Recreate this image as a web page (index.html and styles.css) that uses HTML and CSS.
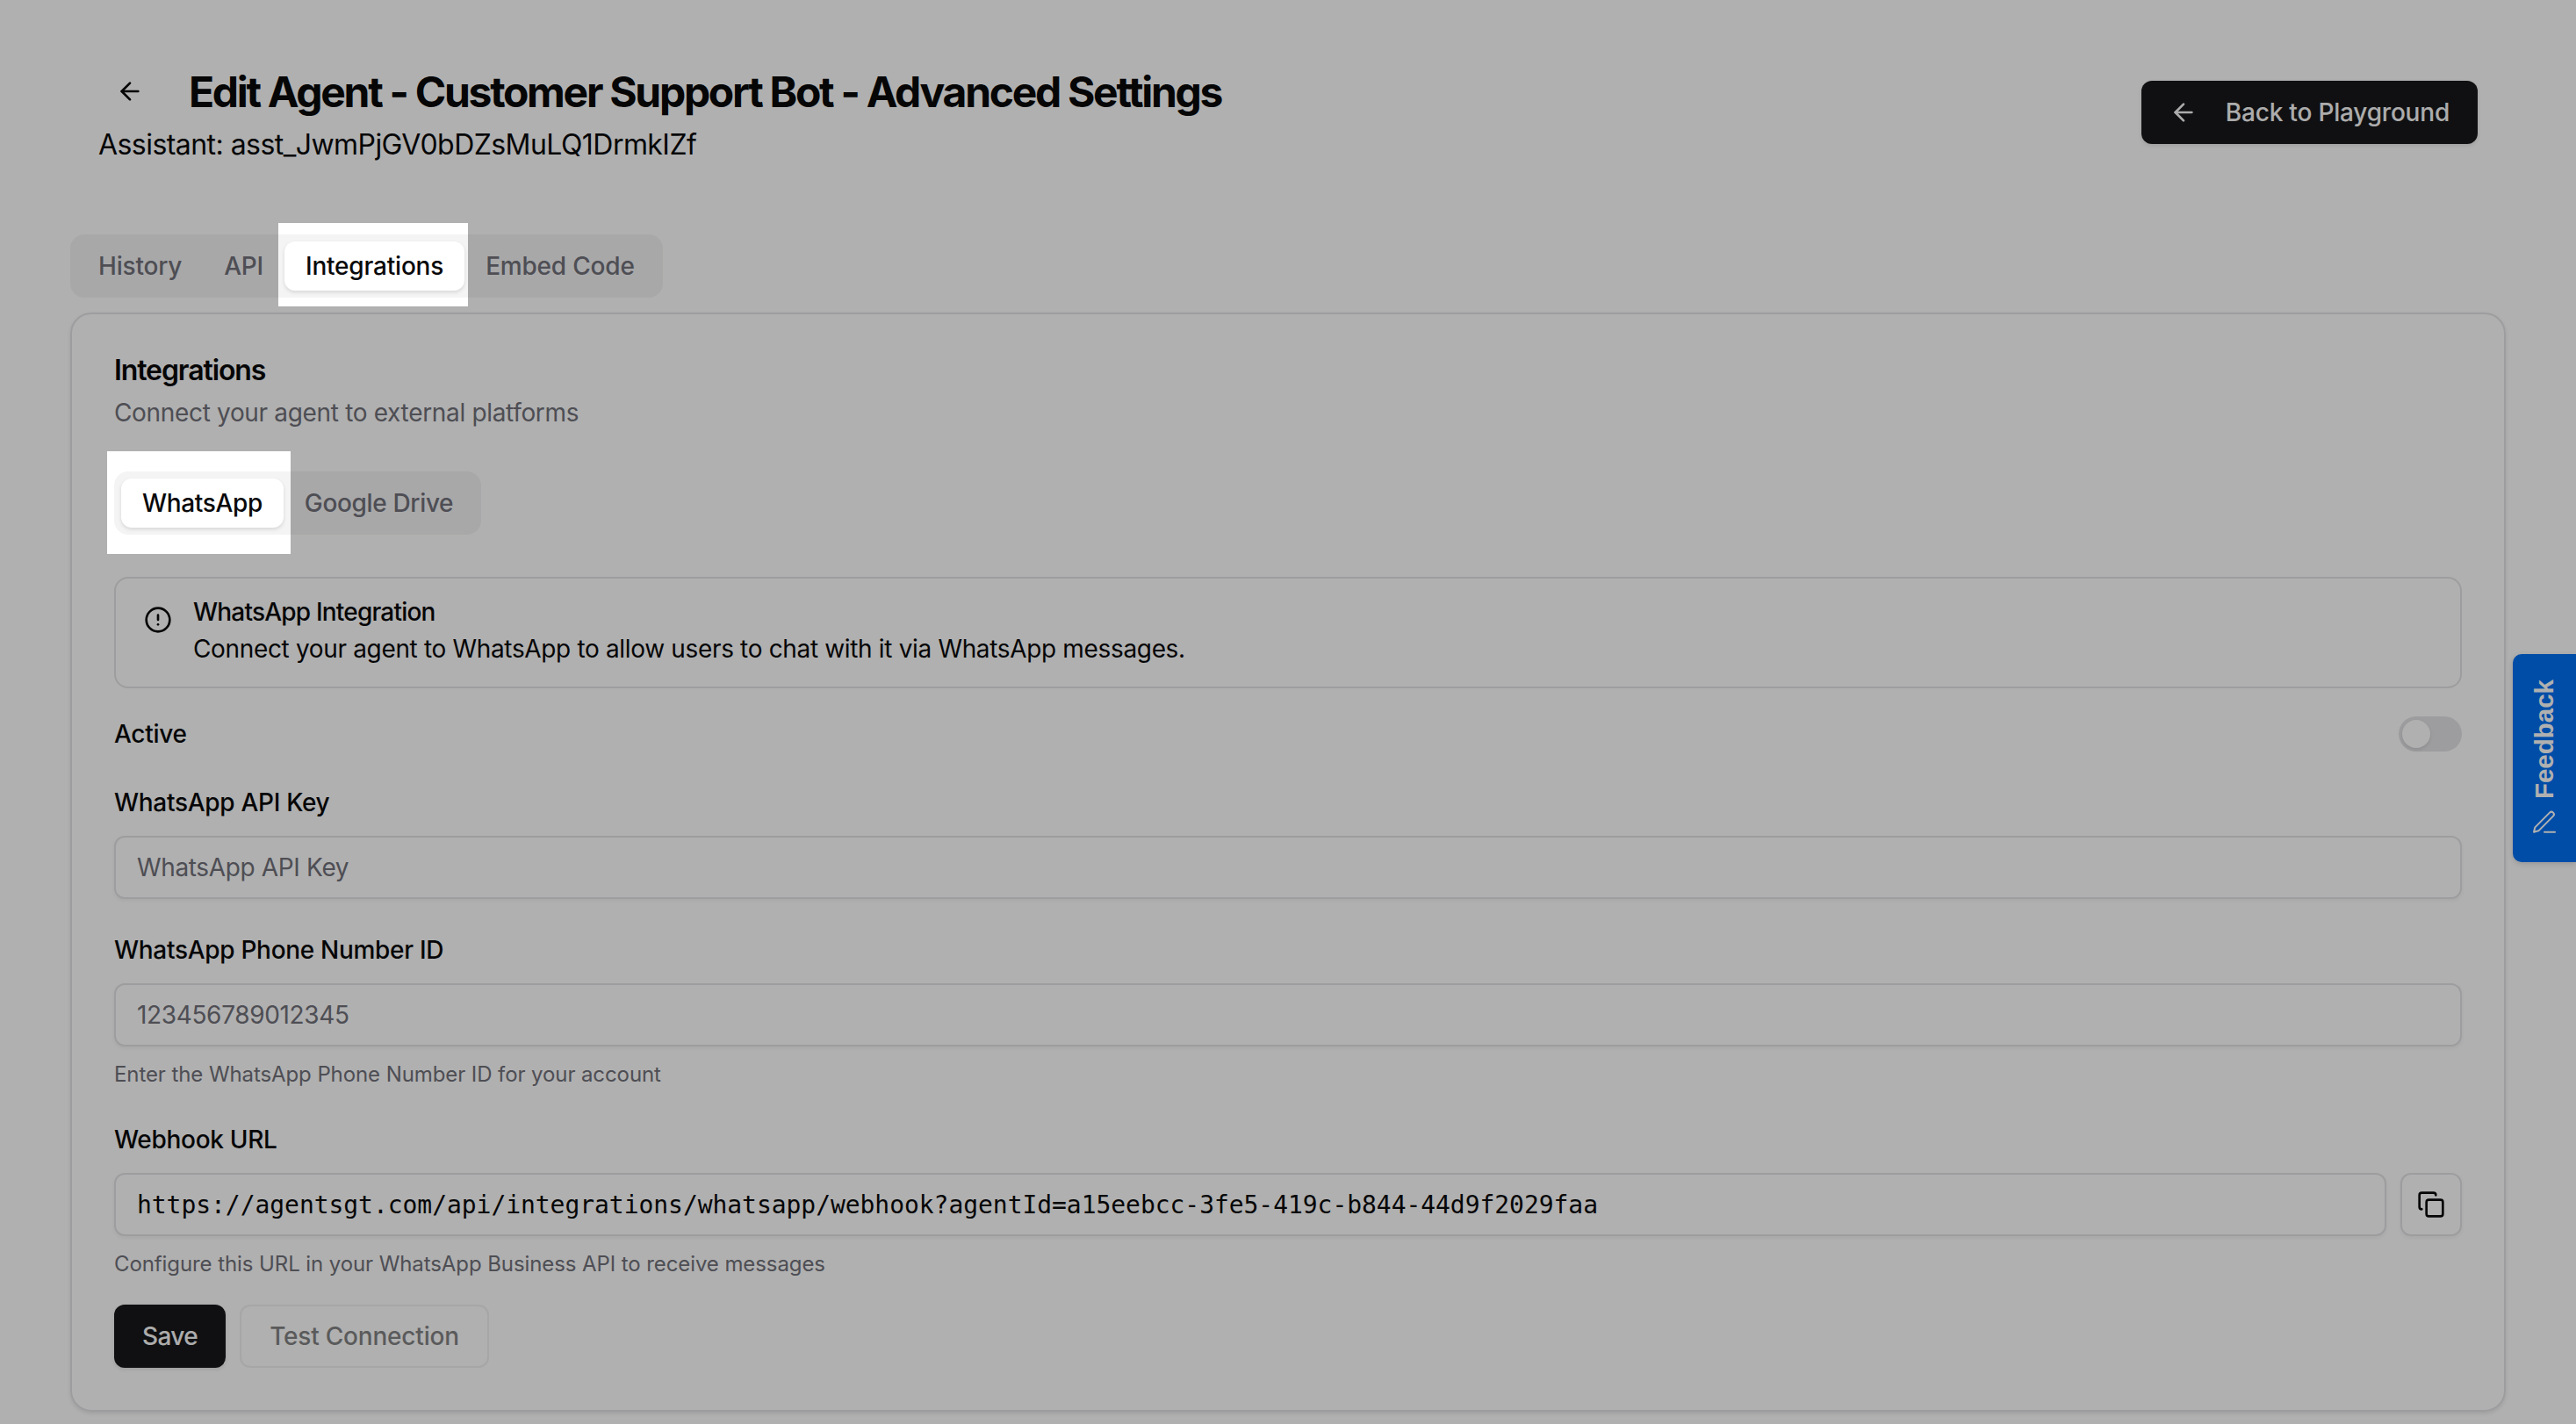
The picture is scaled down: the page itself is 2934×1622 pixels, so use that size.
FILE: index.html
```html
<!DOCTYPE html>
<html lang="en">
<head>
  <meta charset="UTF-8">
  <title>Edit Agent - Advanced Settings</title>
  <link rel="stylesheet" href="styles.css">
</head>
<body>
  <div class="page">
    <header class="page-header">
      <div class="heading">
        <div class="title-row">
          <button type="button" class="back-icon">
            <svg class="icon" viewBox="0 0 24 24"><path d="m12 19-7-7 7-7"/><path d="M19 12H5"/></svg>
          </button>
          <h1>Edit Agent - Customer Support Bot - Advanced Settings</h1>
        </div>
        <p class="assistant-id">Assistant: asst_JwmPjGV0bDZsMuLQ1DrmkIZf</p>
      </div>
      <button type="button" class="btn btn-dark btn-back">
        <svg class="icon" viewBox="0 0 24 24"><path d="m12 19-7-7 7-7"/><path d="M19 12H5"/></svg>
        Back to Playground
      </button>
    </header>

    <div class="tabs main-tabs">
      <span class="tab">History</span>
      <span class="tab">API</span>
      <span class="tab active">Integrations</span>
      <span class="tab">Embed Code</span>
    </div>

    <section class="card">
      <h2>Integrations</h2>
      <p class="card-desc">Connect your agent to external platforms</p>

      <div class="tabs sub-tabs">
        <span class="tab active">WhatsApp</span>
        <span class="tab">Google Drive</span>
      </div>

      <div class="alert">
        <svg class="icon alert-icon" viewBox="0 0 24 24"><circle cx="12" cy="12" r="10"/><path d="M12 8v4"/><path d="M12 16h.01"/></svg>
        <div>
          <h3>WhatsApp Integration</h3>
          <p>Connect your agent to WhatsApp to allow users to chat with it via WhatsApp messages.</p>
        </div>
      </div>

      <div class="active-row">
        <label>Active</label>
        <span class="switch"><span class="thumb"></span></span>
      </div>

      <div class="field">
        <label>WhatsApp API Key</label>
        <input type="text" placeholder="WhatsApp API Key">
      </div>

      <div class="field">
        <label>WhatsApp Phone Number ID</label>
        <input type="text" placeholder="123456789012345">
        <p class="hint">Enter the WhatsApp Phone Number ID for your account</p>
      </div>

      <div class="field">
        <label>Webhook URL</label>
        <div class="copy-row">
          <input type="text" class="mono" value="https://agentsgt.com/api/integrations/whatsapp/webhook?agentId=a15eebcc-3fe5-419c-b844-44d9f2029faa" readonly>
          <button type="button" class="copy-btn">
            <svg class="icon" viewBox="0 0 24 24"><rect x="8" y="8" width="14" height="14" rx="2"/><path d="M4 16c-1.1 0-2-.9-2-2V4c0-1.1.9-2 2-2h10c1.1 0 2 .9 2 2"/></svg>
          </button>
        </div>
        <p class="hint">Configure this URL in your WhatsApp Business API to receive messages</p>
      </div>

      <div class="actions">
        <button type="button" class="btn btn-dark btn-save">Save</button>
        <button type="button" class="btn btn-outline" disabled>Test Connection</button>
      </div>
    </section>
  </div>

  <button type="button" class="feedback">
    <svg class="feedback-icon" viewBox="0 0 24 24"><path d="M12 20h9"/><path d="M16.5 3.5a2.12 2.12 0 0 1 3 3L7 19l-4 1 1-4Z"/></svg>
    <span class="feedback-text">Feedback</span>
  </button>

  <div class="tour-dim"></div>
</body>
</html>
```

FILE: styles.css
```css
* {
  box-sizing: border-box;
}

html, body {
  margin: 0;
  height: 100%;
}

body {
  font-family: Inter, "Liberation Sans", sans-serif;
  color: #09090b;
  background-color: #fff;
  overflow: hidden;
}

button {
  font-family: inherit;
}

.page {
  padding: 68px 80px 0 80px;
}

.icon {
  width: 32px;
  height: 32px;
  fill: none;
  stroke: currentColor;
  stroke-width: 2;
  stroke-linecap: round;
  stroke-linejoin: round;
  flex-shrink: 0;
}

/* Header */
.page-header {
  display: flex;
  align-items: center;
  justify-content: space-between;
  padding: 0 32px;
  margin-bottom: 78px;
}

.title-row {
  display: flex;
  align-items: center;
  gap: 31px;
  height: 72px;
}

.back-icon {
  width: 72px;
  height: 72px;
  display: flex;
  align-items: center;
  justify-content: center;
  border: none;
  background: none;
  padding: 0;
  color: #09090b;
}

h1 {
  margin: 0;
  padding-top: 2px;
  font-size: 48px;
  line-height: 72px;
  font-weight: 700;
  letter-spacing: -2.3px;
}

.assistant-id {
  margin: 1px 0 0;
  font-size: 32px;
  line-height: 48px;
  letter-spacing: -0.55px;
}

/* Buttons */
.btn {
  height: 72px;
  padding: 0 32px;
  border-radius: 12px;
  font-size: 28px;
  font-weight: 500;
  letter-spacing: -0.2px;
  display: inline-flex;
  align-items: center;
}

.btn-dark {
  background-color: #18181b;
  color: #fafafa;
  border: none;
  box-shadow: 0 2px 4px rgba(0,0,0,0.1);
}

.btn-back {
  gap: 32px;
  margin-bottom: 2px;
}

.btn-save {
  letter-spacing: -0.6px;
}

.btn-outline {
  background-color: #fff;
  color: #09090b;
  border: 2px solid #e4e4e7;
  opacity: 0.5;
}

/* Tabs */
.tabs {
  display: flex;
  width: fit-content;
  padding: 8px;
  height: 72px;
  background-color: #f4f4f5;
  border-radius: 16px;
}

.tab {
  padding: 0 24px;
  display: flex;
  align-items: center;
  font-size: 28px;
  font-weight: 500;
  color: #71717a;
  border-radius: 12px;
}

.tab.active {
  background-color: #fff;
  color: #09090b;
  box-shadow: 0 2px 4px rgba(0,0,0,0.12);
}

.main-tabs {
  margin-bottom: 17px;
  letter-spacing: -0.2px;
}

.sub-tabs {
  margin-top: 47px;
  margin-bottom: 48px;
  letter-spacing: -0.35px;
}

/* Card */
.card {
  border: 2px solid #e4e4e7;
  border-radius: 24px;
  padding: 48px;
  box-shadow: 0 2px 4px rgba(0,0,0,0.1);
}

h2 {
  margin: 0;
  font-size: 32px;
  line-height: 32px;
  font-weight: 600;
  letter-spacing: -1.1px;
}

.card-desc {
  margin: 12px 0 0;
  font-size: 28px;
  line-height: 40px;
  letter-spacing: -0.33px;
  color: #71717a;
}

/* Alert */
.alert {
  display: flex;
  gap: 24px;
  height: 127px;
  padding: 24px 32px;
  border: 2px solid #e4e4e7;
  border-radius: 16px;
}

.alert-icon {
  margin-top: 7px;
}

.alert h3 {
  margin: 0 0 8px;
  font-size: 28px;
  line-height: 28px;
  font-weight: 500;
  letter-spacing: -0.8px;
}

.alert p {
  margin: 0;
  font-size: 28px;
  line-height: 40px;
  letter-spacing: -0.34px;
}

/* Form */
label {
  display: block;
  font-size: 28px;
  line-height: 40px;
  font-weight: 500;
  letter-spacing: -0.3px;
}

.active-row {
  display: flex;
  align-items: center;
  justify-content: space-between;
  height: 40px;
  margin-top: 32px;
}

.switch {
  width: 72px;
  height: 40px;
  padding: 4px;
  border-radius: 20px;
  background-color: #e4e4e7;
  display: block;
}

.thumb {
  display: block;
  width: 32px;
  height: 32px;
  border-radius: 50%;
  background-color: #fff;
  box-shadow: 0 2px 4px rgba(0,0,0,0.1);
}

.field {
  margin-top: 38px;
}

.field label {
  margin-bottom: 18px;
}

input {
  display: block;
  width: 100%;
  height: 72px;
  padding: 0 24px;
  border: 2px solid #e4e4e7;
  border-radius: 12px;
  font-family: inherit;
  font-size: 28px;
  letter-spacing: -0.35px;
  color: #09090b;
  background-color: #fff;
  box-shadow: 0 2px 4px rgba(0,0,0,0.05);
}

input::placeholder {
  color: #71717a;
  opacity: 1;
}

input.mono {
  font-family: "DejaVu Sans Mono", "Liberation Mono", monospace;
  letter-spacing: -0.05px;
}

.hint {
  margin: 16px 0 0;
  font-size: 24px;
  line-height: 32px;
  letter-spacing: -0.09px;
  color: #71717a;
}

.copy-row {
  display: flex;
  gap: 16px;
}

.copy-btn {
  width: 70px;
  height: 72px;
  flex-shrink: 0;
  padding: 0;
  display: flex;
  align-items: center;
  justify-content: center;
  background-color: #fff;
  color: #09090b;
  border: 2px solid #e4e4e7;
  border-radius: 12px;
  box-shadow: 0 2px 4px rgba(0,0,0,0.05);
}

.actions {
  display: flex;
  align-items: center;
  gap: 16px;
  margin-top: 30px;
}

/* Feedback tab sits on the page edge, over the content */
.feedback {
  position: absolute;
  top: 745px;
  right: 0;
  width: 72px;
  height: 237px;
  padding: 30px 0 29px;
  display: flex;
  flex-direction: column-reverse;
  align-items: center;
  justify-content: flex-start;
  gap: 11px;
  background-color: #0070f3;
  color: #fff;
  border: none;
  border-radius: 10px 0 0 10px;
  box-shadow: 0 2px 6px rgba(0,0,0,0.15);
}

.feedback-text {
  writing-mode: vertical-rl;
  transform: rotate(180deg);
  font-family: "Liberation Sans", Arial, sans-serif;
  font-size: 29.5px;
  line-height: 32px;
  font-weight: 700;
}

.feedback-icon {
  width: 32px;
  height: 32px;
  fill: none;
  stroke: currentColor;
  stroke-width: 1.5;
  stroke-linecap: round;
  stroke-linejoin: round;
  flex-shrink: 0;
}

/* Product tour dimmer, two holes cut out for the highlighted tabs */
.tour-dim {
  position: absolute;
  inset: 0;
  background-color: rgba(0,0,0,0.31);
  clip-path: path(evenodd, "M0 0H2934V1622H0Z M317 254H533V349H317Z M122 514H331V631H122Z");
}
```
